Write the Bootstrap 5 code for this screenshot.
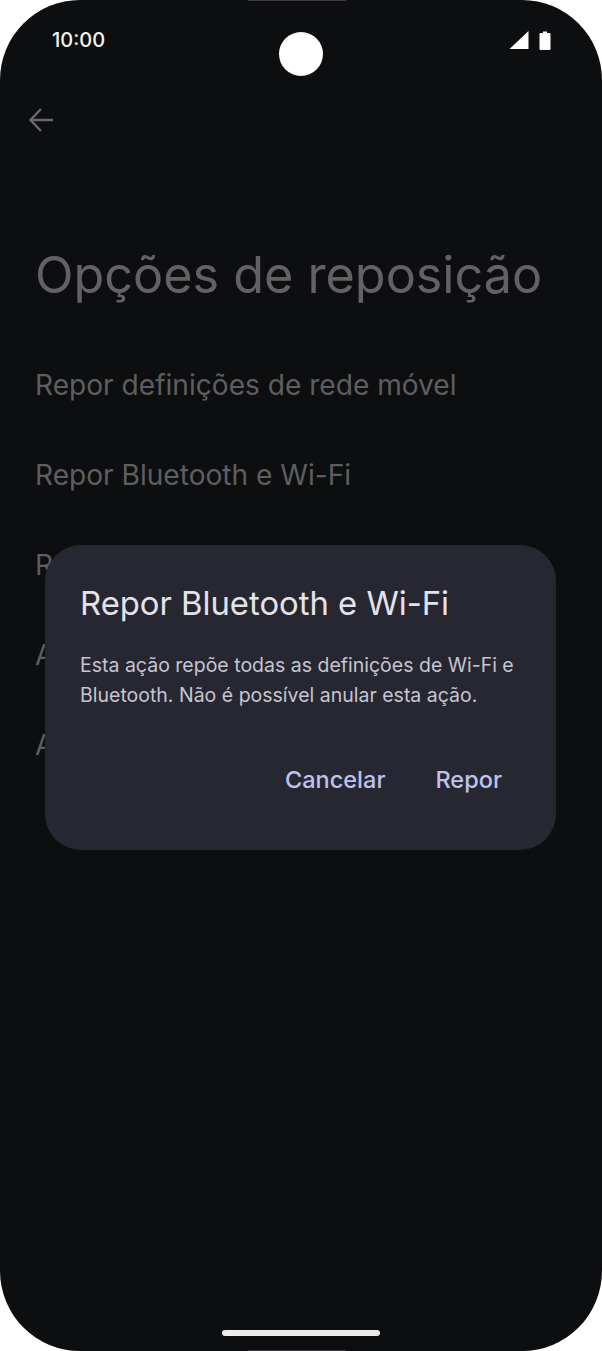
<!DOCTYPE html>
<html lang="pt">
  <head>
    <meta charset="UTF-8" />
    <meta name="viewport" content="width=device-width, initial-scale=1.0" />
    <title>Opções de reposição</title>
    <link href="https://cdn.jsdelivr.net/npm/bootstrap@5.3.0/dist/css/bootstrap.min.css" rel="stylesheet" />
    <style>
      body {
        background: #fff;
        font-family: Inter, Roboto, "Liberation Sans", sans-serif;
      }
      #phone {
        position: relative;
        width: 602px;
        height: 1351px;
        background: #0d0e10;
        border-radius: 80px;
        overflow: hidden;
      }
      .edge-mark {
        position: absolute;
        left: 248px;
        width: 98px;
        height: 1px;
        background: #3c3c3e;
      }
      .status-row {
        height: 80px;
        padding: 0 51px 0 52px;
        color: #f5f5f5;
        font-size: 20px;
        font-weight: 500;
      }
      .status-icons {
        gap: 10px;
      }
      #camera {
        position: absolute;
        left: 279px;
        top: 32px;
        width: 44px;
        height: 44px;
        border-radius: 50%;
        background: #fff;
      }
      .back-row {
        height: 40px;
        margin-top: 20px;
        padding-left: 28px;
      }
      .page-title {
        margin: 95px 0 0 35px;
        height: 80px;
        font-size: 50.3px;
        line-height: 80px;
        font-weight: 400;
        color: #626264;
        white-space: nowrap;
      }
      .menu-list {
        margin: 25px 0 0 35px;
      }
      .menu-row {
        height: 90px;
        font-size: 28.1px;
        line-height: 90px;
        color: #5e5e60;
        white-space: nowrap;
      }
      #dialog {
        position: absolute;
        left: 45px;
        top: 545px;
        width: 511px;
        height: 305px;
        background: #272731;
        border: 0;
        border-radius: 36px;
        padding: 35px 35px 0;
      }
      .dialog-title {
        font-size: 32.8px;
        line-height: 46px;
        font-weight: 400;
        color: #e5e3ea;
        margin: 0 0 24px;
      }
      .dialog-text {
        font-size: 19.5px;
        line-height: 30px;
        color: #c6c5d0;
        margin: 0;
      }
      .dialog-actions {
        margin-top: 55px;
        padding-right: 19px;
        gap: 50px;
      }
      .dialog-btn {
        padding: 0;
        border: 0;
        font-size: 23.5px;
        line-height: 30px;
        font-weight: 500;
        color: #bec2f0;
      }
      .home-bar {
        position: absolute;
        left: 222px;
        top: 1330px;
        width: 158px;
        height: 6px;
        border-radius: 3px;
        background: #ececec;
      }
    </style>
  </head>
  <body class="m-0">
    <div id="phone">
      <div class="edge-mark top-0"></div>
      <div class="edge-mark bottom-0"></div>

      <div class="status-row d-flex justify-content-between align-items-center">
        <span>10:00</span>
        <span class="status-icons d-flex align-items-center">
          <svg width="20" height="18" viewBox="0 0 20 18"><path d="M0.5 18 19.5 0V18Z" fill="#fff" /></svg>
          <svg width="12" height="19" viewBox="0 0 12 19"><path d="M4 0.5H8V2H10.5Q11.5 2 11.5 3V18Q11.5 19 10.5 19H1.5Q0.5 19 0.5 18V3Q0.5 2 1.5 2H4Z" fill="#fff" /></svg>
        </span>
      </div>
      <div id="camera"></div>

      <div class="back-row d-flex align-items-center">
        <svg width="26" height="26" viewBox="0 0 26 26" fill="none" stroke="#68686a" stroke-width="2.4">
          <path d="M25 13H3M13 2 2.5 13 13 24" />
        </svg>
      </div>

      <h1 class="page-title">Opções de reposição</h1>

      <div class="menu-list">
        <div class="menu-row">Repor definições de rede móvel</div>
        <div class="menu-row">Repor Bluetooth e Wi-Fi</div>
        <div class="menu-row">R</div>
        <div class="menu-row">A</div>
        <div class="menu-row">A</div>
      </div>

      <div id="dialog" class="card">
        <h2 class="dialog-title">Repor Bluetooth e Wi-Fi</h2>
        <p class="dialog-text">Esta ação repõe todas as definições de Wi-Fi e<br />Bluetooth. Não é possível anular esta ação.</p>
        <div class="dialog-actions d-flex justify-content-end">
          <button type="button" class="btn dialog-btn">Cancelar</button>
          <button type="button" class="btn dialog-btn">Repor</button>
        </div>
      </div>

      <div class="home-bar"></div>
    </div>
    <script src="https://cdn.jsdelivr.net/npm/bootstrap@5.3.0/dist/js/bootstrap.bundle.min.js"></script>
  </body>
</html>
